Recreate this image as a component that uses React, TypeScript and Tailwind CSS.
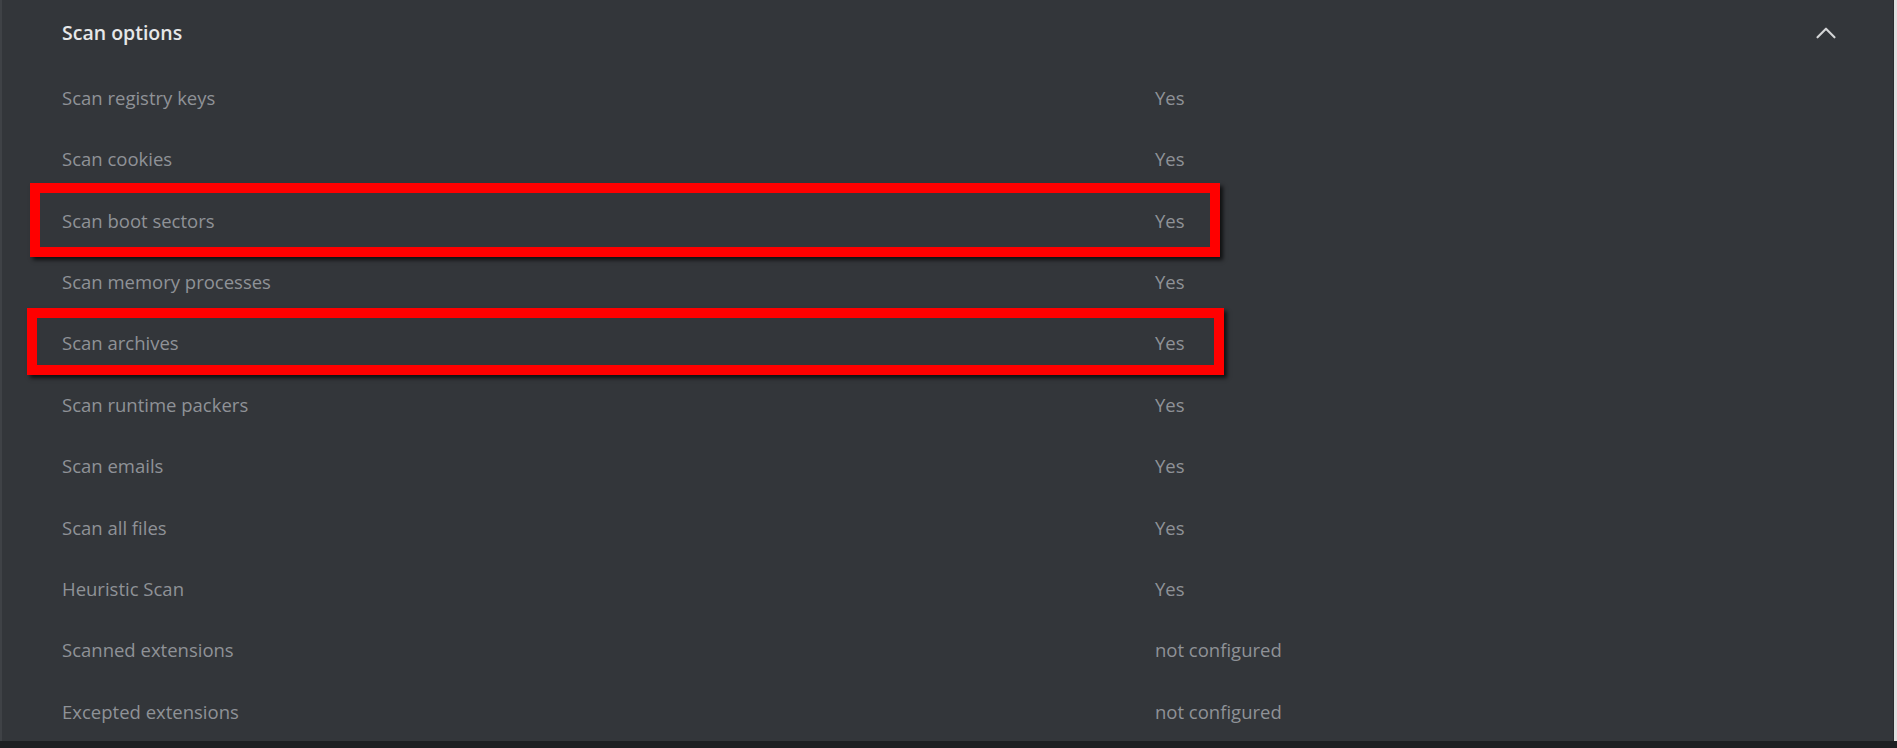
import { ChevronUp } from 'lucide-react';

const options = [
  { label: 'Scan registry keys', value: 'Yes' },
  { label: 'Scan cookies', value: 'Yes' },
  { label: 'Scan boot sectors', value: 'Yes' },
  { label: 'Scan memory processes', value: 'Yes' },
  { label: 'Scan archives', value: 'Yes' },
  { label: 'Scan runtime packers', value: 'Yes' },
  { label: 'Scan emails', value: 'Yes' },
  { label: 'Scan all files', value: 'Yes' },
  { label: 'Heuristic Scan', value: 'Yes' },
  { label: 'Scanned extensions', value: 'not configured' },
  { label: 'Excepted extensions', value: 'not configured' },
];

export default function App() {
  return (
    <div className="w-[1897px] h-[748px] flex flex-col bg-[#1d1f22] overflow-hidden" style={{ fontFamily: '"Open Sans", "Noto Sans", sans-serif' }}>
      <div className="h-[741px] flex overflow-hidden">
        <div className="w-[2px] bg-[#3f4246]" />
        <div className="relative flex-1 bg-[#33363a]">
          {/* Header */}
          <div className="h-[67px] flex items-center pl-[60px] pr-[50px] justify-between">
            <span className="text-[19.5px] font-semibold text-[#e6e7e8] -mt-[2px]">Scan options</span>
            <ChevronUp className="w-[34px] h-[34px] text-[#d4d5d6] -mt-[2px]" strokeWidth={1.5} />
          </div>

          {/* Rows */}
          {options.map((o) => (
            <div key={o.label} className="h-[61.4px] flex items-center pl-[60px] text-[18.5px] text-[#8f9297]">
              <span className="w-[1093px]">{o.label}</span>
              <span>{o.value}</span>
            </div>
          ))}

          {/* Annotation boxes */}
          <div className="absolute left-[28px] top-[183px] w-[1190px] h-[74px] border-[10px] border-[#ff0000] shadow-[3px_3px_4px_rgba(0,0,0,0.7)]" />
          <div className="absolute left-[25px] top-[308px] w-[1197px] h-[67px] border-[10px] border-[#ff0000] shadow-[3px_3px_4px_rgba(0,0,0,0.7)]" />
        </div>
        <div className="w-[1px] bg-[#2a2c2f]" />
        <div className="w-[3px] bg-[#e0e0e0]" />
      </div>
    </div>
  );
}
